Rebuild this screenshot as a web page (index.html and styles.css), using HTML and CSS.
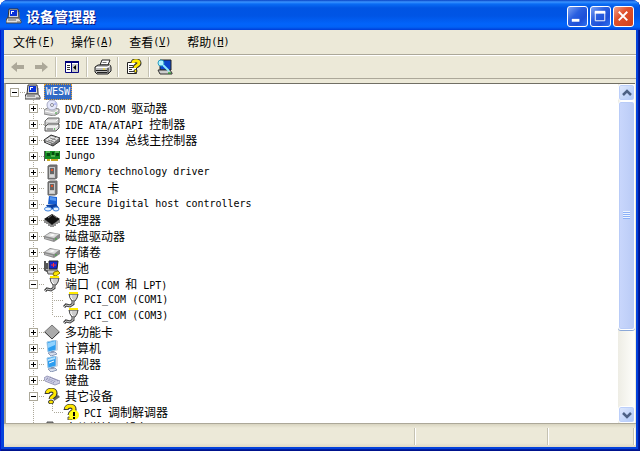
FILE: index.html
```html
<!DOCTYPE html>
<html lang="zh-CN">
<head>
  <meta charset="UTF-8">
  <meta name="viewport" content="width=device-width, initial-scale=1.0">
  <title>设备管理器</title>
  <link rel="stylesheet" href="styles.css">
</head>
<body>

  <svg class="sprite" width="0" height="0">
    <symbol id="i-computer" viewBox="0 0 16 16">
      <path d="M3 1h9l1 9H2z" fill="#d8d8d8" stroke="#333"/>
      <path d="M4 2h7v6H4z" fill="#0a32d8"/>
      <path d="M5 3h3v1H6v2H5z" fill="#fff"/>
      <path d="M1 10h12l2 3v2H0v-2z" fill="#ddd" stroke="#444"/>
      <path d="M2 12h8M11 14h3" stroke="#666"/>
      <path d="M13 4v6l2 2" fill="none" stroke="#777"/>
    </symbol>
    <symbol id="i-dvd" viewBox="0 0 16 16">
      <path d="M0 10l5-3 10 2v4l-5 3-10-2z" fill="#c9c9cb" stroke="#888"/>
      <path d="M1 11l9 2 4-3" fill="none" stroke="#fff"/>
      <ellipse cx="8" cy="5" rx="5" ry="5" fill="#e4e7fa" stroke="#a9abc4"/>
      <path d="M8 5l4-3 1 3z" fill="#b6bdf2"/>
      <circle cx="8" cy="5" r="1.5" fill="#fff" stroke="#889"/>
      <path d="M11 13h2" stroke="#4a4"/>
    </symbol>
    <symbol id="i-ide" viewBox="0 0 16 16">
      <path d="M1 5l3-3h11v5l-3 3H1z" fill="#ccc" stroke="#666"/>
      <path d="M2 5h10l2-2" fill="none" stroke="#fff"/>
      <path d="M1 11l3-3h11v4l-3 3H1z" fill="#ddd" stroke="#555"/>
      <path d="M2 11h10l2-2" fill="none" stroke="#fff"/>
      <path d="M3 13h6" stroke="#666"/>
      <path d="M10 13h1" stroke="#0a0"/>
    </symbol>
    <symbol id="i-1394" viewBox="0 0 16 16">
      <path d="M0 8l7-5 9 3v3l-7 5-9-4z" fill="#777" stroke="#333"/>
      <path d="M1 8l6-4 8 2-6 5z" fill="#e6e6e6"/>
      <path d="M4 8l6 2M6 6l6 2M7 9l5-4" stroke="#888"/>
      <path d="M2 10l5 2" stroke="#ddd"/>
    </symbol>
    <symbol id="i-jungo" viewBox="0 0 16 16">
      <path d="M0 3v10" stroke="#555" stroke-width="2"/>
      <path d="M1 3h15v8H1z" fill="#138a22"/>
      <path d="M3 5h3v3H3zM8 4h2v3H8zM12 5h3v3h-3z" fill="#064b10"/>
      <path d="M2 4h4M7 8h4M11 4h4" stroke="#8edb80"/>
      <path d="M3 12h3M7 12h7" stroke="#c5a821" stroke-width="2"/>
    </symbol>
    <symbol id="i-card" viewBox="0 0 16 16">
      <path d="M4 2l2-1h7v13l-2 1H4z" fill="#777" stroke="#666"/>
      <path d="M5 3h6v11H5z" fill="#c5c5c5"/>
      <path d="M6 4h4v6H6z" fill="#666"/>
      <path d="M7 5h2v2H7z" fill="#e2542c"/>
      <path d="M6 12h4" stroke="#eee"/>
    </symbol>
    <symbol id="i-sd" viewBox="0 0 16 16">
      <path d="M5 0l8 1v8l-9-1z" fill="#1860d4"/>
      <path d="M6 1l6 1v3L6 4z" fill="#5597f0"/>
      <path d="M2 9l10-1 3 4-10 2z" fill="#0b3fa0"/>
      <ellipse cx="4" cy="13" rx="3.5" ry="2" fill="#e8f2ff" stroke="#3c82dd"/>
      <ellipse cx="12" cy="13" rx="3" ry="2" fill="#e8f2ff" stroke="#3c82dd"/>
    </symbol>
    <symbol id="i-cpu" viewBox="0 0 16 16">
      <path d="M0 7l8-5 8 5-8 6z" fill="#111"/>
      <path d="M1 8v3M3 9v3M5 10v4M7 12v3M9 12v3M11 10v4M13 9v3M15 8v3" stroke="#222"/>
      <path d="M4 6l4-3M9 3l4 3" fill="none" stroke="#777"/>
    </symbol>
    <symbol id="i-disk" viewBox="0 0 16 16">
      <path d="M0 8l6-4 10 2v4l-6 4-10-3z" fill="#8a8a8a"/>
      <path d="M1 8l5-3 9 1-5 4z" fill="#dcdcdc"/>
      <path d="M5 7l4-1 2 1-3 1z" fill="#fff"/>
      <path d="M1 10l8 2" stroke="#bbb"/>
      <path d="M11 11h2" stroke="#3a3"/>
    </symbol>
    <symbol id="i-battery" viewBox="0 0 16 16">
      <path d="M1 1v9l4 2M3 3v6" fill="none" stroke="#555" stroke-width="2"/>
      <path d="M5 1h9l-1 8H5z" fill="#1626d0" stroke="#222"/>
      <path d="M7 5h5M9.500 3v4" stroke="#f33"/>
      <path d="M3 10h11l-2 4H4z" fill="#c9c9c9" stroke="#555"/>
      <path d="M10 12l4-1 2 2-4 3-3-1z" fill="#ffe600" stroke="#8b7a00"/>
    </symbol>
    <symbol id="i-port" viewBox="0 0 16 16">
      <path d="M6 2h9l-1 4-2 3H9L7 6z" fill="#ccc" stroke="#444"/>
      <path d="M6 1h9" stroke="#ffea00" stroke-width="2"/>
      <path d="M8 3v3l2 2" fill="none" stroke="#fff"/>
      <path d="M10 9v3l-3 2-4-1-2 2" fill="none" stroke="#444" stroke-width="3"/>
      <path d="M10 9v3l-3 2-4-1-2 2" fill="none" stroke="#ccc"/>
    </symbol>
    <symbol id="i-multi" viewBox="0 0 16 16">
      <path d="M8 1l7.500 7L8 15 .5 8z" fill="#aaa" stroke="#777"/>
      <path d="M1 8l7 7 7-7" fill="none" stroke="#444"/>
    </symbol>
    <symbol id="i-pc" viewBox="0 0 16 16">
      <path d="M3 2l9-2v10l-8 2z" fill="#2c9df0" stroke="#9cc6e6"/>
      <path d="M4 3l7-2v4L4 8z" fill="#8fd2ff"/>
      <path d="M12 0l2 1v9l-2 1z" fill="#ccd5e2"/>
      <path d="M7 11h3l1 2-3 1z" fill="#7f93b4"/>
      <path d="M4 13l7-1 2 2-6 2z" fill="#d5ddec" stroke="#8c9bb8"/>
    </symbol>
    <symbol id="i-monitor" viewBox="0 0 16 16">
      <path d="M3 2l9-2v10l-8 2z" fill="#2c9df0" stroke="#9cc6e6"/>
      <path d="M4 3l7-2v2L4 5z" fill="#b4e2ff"/>
      <path d="M5 7l5-2" stroke="#fff"/>
      <path d="M12 0l2 1v9l-2 1z" fill="#ccd5e2"/>
      <path d="M7 11h3l1 2-3 1z" fill="#7f93b4"/>
      <path d="M4 13l7-1 2 2-6 2z" fill="#d5ddec" stroke="#8c9bb8"/>
    </symbol>
    <symbol id="i-keyboard" viewBox="0 0 16 16">
      <path d="M0 6l3-2 13 5v2l-5 2-10-4z" fill="#cfd0e6" stroke="#9a9bbb"/>
      <path d="M3 6l9 4M2 7l8 4M6 5l8 4" stroke="#7d7fa8" stroke-dasharray="1 1"/>
    </symbol>
    <symbol id="i-unknown" viewBox="0 0 16 16">
      <path d="M9 9l5-2 2 2-6 4z" fill="#666"/>
      <path d="M3 6c0-5 9-5 8 0-1 3-4 2-4 5" fill="none" stroke="#333" stroke-width="5"/>
      <path d="M3 5c1-4 8-4 8 0s-4 3-4 6" fill="none" stroke="#ffe800" stroke-width="3"/>
      <ellipse cx="7" cy="14" rx="2.500" ry="2" fill="#ffe800" stroke="#333"/>
    </symbol>
    <symbol id="i-warning" viewBox="0 0 16 16">
      <path d="M3 6c0-5 9-5 8 0-1 3-4 2-4 5" fill="none" stroke="#333" stroke-width="5"/>
      <path d="M3 5c1-4 8-4 8 0s-4 3-4 6" fill="none" stroke="#ffe800" stroke-width="3"/>
      <path d="M5 13h4v3H5z" fill="#ffe800" stroke="#555"/>
      <circle cx="11" cy="11" r="5" fill="#ffff1a"/>
      <path d="M11 8v4M11 13v2" stroke="#000" stroke-width="2"/>
    </symbol>
    <symbol id="i-hid" viewBox="0 0 16 16">
      <path d="M3 2h6v13H3z" fill="#888" stroke="#555"/>
    </symbol>
    <symbol id="i-arrow" viewBox="0 0 14 12">
      <path d="M0 6l6-5v3h7v4H6v3z" fill="#aca899"/>
    </symbol>
    <symbol id="i-panel" viewBox="0 0 16 16">
      <path d="M1.500 2.500h13v11h-13z" fill="#fff" stroke="#00007b"/>
      <path d="M1 3h14" stroke="#00007b" stroke-width="2"/>
      <path d="M7.500 4v9" stroke="#00007b"/>
      <path d="M8 5h6v8H8z" fill="#c8c8c8"/>
      <path d="M3 6.500h3M3 8.500h3M3 10.500h3" stroke="#333"/>
      <path d="M12 6v5L9 8.500z" fill="#000"/>
    </symbol>
    <symbol id="i-print" viewBox="0 0 18 16">
      <path d="M6 6l2-5h8l-2 5z" fill="#fff" stroke="#222"/>
      <path d="M8.500 3.500h4M8 5.500h4" stroke="#777"/>
      <path d="M1 8l3-2h12l1 2v4l-3 3H3l-2-2z" fill="#bbb" stroke="#222"/>
      <path d="M2 8.500h11l3-2" fill="none" stroke="#fff"/>
      <path d="M2 11.500h11M3 13.500h10" stroke="#222"/>
      <path d="M9 10h2" stroke="#ffe800"/>
      <path d="M14 9v5" stroke="#222"/>
    </symbol>
    <symbol id="i-help" viewBox="0 0 16 16">
      <path d="M1.500 3.500h9v11h-9z" fill="#fff" stroke="#222"/>
      <path d="M3 6.500h4M3 8.500h4M3 10.500h3M3 12.500h5" stroke="#333"/>
      <path d="M7 4c0-3 6-3 6 0s-4 2-4 5" fill="none" stroke="#333" stroke-width="5"/>
      <path d="M7 4c0-3 6-3 6 0s-4 2-4 5" fill="none" stroke="#ffe800" stroke-width="3"/>
      <circle cx="9.500" cy="12" r="1.500" fill="#ffe800" stroke="#333"/>
    </symbol>
    <symbol id="i-scan" viewBox="0 0 16 16">
      <path d="M3 1h11v10H3z" fill="#0b46cc" stroke="#222"/>
      <path d="M1 11h12l2 3v1H3z" fill="#ccc" stroke="#333"/>
      <circle cx="4" cy="4" r="3" fill="#b2f2ff" stroke="#289cc2"/>
      <path d="M6 6l6 6" stroke="#8eeaff" stroke-width="2"/>
      <path d="M11 14h3" stroke="#090"/>
    </symbol>
    <symbol id="i-chevron" viewBox="0 0 10 8">
      <path d="M1 6l4-4 4 4" fill="none" stroke="#4d6185" stroke-width="2.500"/>
    </symbol>
  </svg>

  <div class="window">
    <header class="title-bar">
      <svg class="icon"><use href="#i-computer"/></svg>
      <h1>设备管理器</h1>
      <button type="button" class="caption" aria-label="最小化"><svg viewBox="0 0 20 20"><path d="M4 14h8" stroke="#fff" stroke-width="3"/></svg></button>
      <button type="button" class="caption" aria-label="最大化"><svg viewBox="0 0 20 20"><path d="M4.500 5v9.500h10V5" fill="none" stroke="#fff"/><path d="M4 5.500h11" stroke="#fff" stroke-width="3"/></svg></button>
      <button type="button" class="caption close" aria-label="关闭"><svg viewBox="0 0 20 20"><path d="M5 5l9 9M14 5l-9 9" stroke="#fff" stroke-width="2"/></svg></button>
    </header>

    <nav class="menu-bar">
      <button type="button">文件<span class="en">(<u>F</u>)</span></button>
      <button type="button">操作<span class="en">(<u>A</u>)</span></button>
      <button type="button">查看<span class="en">(<u>V</u>)</span></button>
      <button type="button">帮助<span class="en">(<u>H</u>)</span></button>
    </nav>

    <div class="tool-bar">
      <button type="button" aria-label="后退"><svg class="arrow"><use href="#i-arrow"/></svg></button>
      <button type="button" aria-label="前进"><svg class="arrow flip"><use href="#i-arrow"/></svg></button>
      <span class="sep"></span>
      <button type="button" aria-label="显示/隐藏控制台树"><svg class="icon"><use href="#i-panel"/></svg></button>
      <span class="sep"></span>
      <button type="button" aria-label="打印"><svg class="icon wide"><use href="#i-print"/></svg></button>
      <span class="sep"></span>
      <button type="button" aria-label="帮助"><svg class="icon"><use href="#i-help"/></svg></button>
      <span class="sep"></span>
      <button type="button" aria-label="扫描检测硬件改动"><svg class="icon"><use href="#i-scan"/></svg></button>
    </div>

    <main class="content">
      <div class="tree">
        <div class="row">
          <button type="button" class="toggle open" aria-label="折叠"></button><i></i>
          <svg class="icon"><use href="#i-computer"/></svg>
          <span class="label selected en">WESW</span>
        </div>
        <ul class="devices">
          <li class="row"><button type="button" class="toggle" aria-label="展开"></button><i></i><svg class="icon"><use href="#i-dvd"/></svg><span class="label"><span class="en">DVD/CD-ROM </span>驱动器</span></li>
          <li class="row"><button type="button" class="toggle" aria-label="展开"></button><i></i><svg class="icon"><use href="#i-ide"/></svg><span class="label"><span class="en">IDE ATA/ATAPI </span>控制器</span></li>
          <li class="row"><button type="button" class="toggle" aria-label="展开"></button><i></i><svg class="icon"><use href="#i-1394"/></svg><span class="label"><span class="en">IEEE 1394 </span>总线主控制器</span></li>
          <li class="row"><button type="button" class="toggle" aria-label="展开"></button><i></i><svg class="icon"><use href="#i-jungo"/></svg><span class="label"><span class="en">Jungo</span></span></li>
          <li class="row"><button type="button" class="toggle" aria-label="展开"></button><i></i><svg class="icon"><use href="#i-card"/></svg><span class="label"><span class="en">Memory technology driver</span></span></li>
          <li class="row"><button type="button" class="toggle" aria-label="展开"></button><i></i><svg class="icon"><use href="#i-card"/></svg><span class="label"><span class="en">PCMCIA </span>卡</span></li>
          <li class="row"><button type="button" class="toggle" aria-label="展开"></button><i></i><svg class="icon"><use href="#i-sd"/></svg><span class="label"><span class="en">Secure Digital host controllers</span></span></li>
          <li class="row"><button type="button" class="toggle" aria-label="展开"></button><i></i><svg class="icon"><use href="#i-cpu"/></svg><span class="label">处理器</span></li>
          <li class="row"><button type="button" class="toggle" aria-label="展开"></button><i></i><svg class="icon"><use href="#i-disk"/></svg><span class="label">磁盘驱动器</span></li>
          <li class="row"><button type="button" class="toggle" aria-label="展开"></button><i></i><svg class="icon"><use href="#i-disk"/></svg><span class="label">存储卷</span></li>
          <li class="row"><button type="button" class="toggle" aria-label="展开"></button><i></i><svg class="icon"><use href="#i-battery"/></svg><span class="label">电池</span></li>
          <li>
            <div class="row"><button type="button" class="toggle open" aria-label="折叠"></button><i></i><svg class="icon"><use href="#i-port"/></svg><span class="label">端口<span class="en"> (COM </span>和<span class="en"> LPT)</span></span></div>
            <ul class="sub">
              <li class="row"><i></i><svg class="icon"><use href="#i-port"/></svg><span class="label"><span class="en">PCI_COM (COM1)</span></span></li>
              <li class="row"><i></i><svg class="icon"><use href="#i-port"/></svg><span class="label"><span class="en">PCI_COM (COM3)</span></span></li>
            </ul>
          </li>
          <li class="row"><button type="button" class="toggle" aria-label="展开"></button><i></i><svg class="icon"><use href="#i-multi"/></svg><span class="label">多功能卡</span></li>
          <li class="row"><button type="button" class="toggle" aria-label="展开"></button><i></i><svg class="icon"><use href="#i-pc"/></svg><span class="label">计算机</span></li>
          <li class="row"><button type="button" class="toggle" aria-label="展开"></button><i></i><svg class="icon"><use href="#i-monitor"/></svg><span class="label">监视器</span></li>
          <li class="row"><button type="button" class="toggle" aria-label="展开"></button><i></i><svg class="icon"><use href="#i-keyboard"/></svg><span class="label">键盘</span></li>
          <li>
            <div class="row"><button type="button" class="toggle open" aria-label="折叠"></button><i></i><svg class="icon"><use href="#i-unknown"/></svg><span class="label">其它设备</span></div>
            <ul class="sub">
              <li class="row"><i></i><svg class="icon"><use href="#i-warning"/></svg><span class="label"><span class="en">PCI </span>调制解调器</span></li>
            </ul>
          </li>
          <li class="row"><button type="button" class="toggle" aria-label="展开"></button><i></i><svg class="icon"><use href="#i-hid"/></svg><span class="label">人体学输入设备</span></li>
        </ul>
      </div>
      <div class="scrollbar">
        <button type="button" aria-label="向上滚动"><svg><use href="#i-chevron"/></svg></button>
        <div class="track"><div class="thumb"><span class="grip"></span></div></div>
        <button type="button" aria-label="向下滚动"><svg class="down"><use href="#i-chevron"/></svg></button>
      </div>
    </main>

    <footer class="status-bar">
      <span></span>
      <span></span>
      <span></span>
    </footer>
  </div>

</body>
</html>
```

FILE: styles.css
```css
* {
  box-sizing: border-box;
}
body {
  margin: 0;
  background-color: #fff;
  font-family: "Noto Sans CJK SC", sans-serif;
  font-size: 12px;
  color: #000;
}
button {
  padding: 0;
  border: none;
  background: none;
  font: inherit;
  color: inherit;
}
ul {
  margin: 0;
  padding: 0;
  list-style: none;
}
svg {
  display: block;
  flex: none;
}
.sprite {
  position: absolute;
}
.icon {
  width: 16px;
  height: 16px;
}
.icon.wide {
  width: 18px;
}
.en {
  font-family: "DejaVu Sans Mono", monospace;
  font-size: 10px;
  white-space: pre;
}

/* window frame */
.window {
  display: flex;
  flex-direction: column;
  height: 100vh;
  padding: 0 4px 4px;
  border-radius: 8px 8px 0 0;
  background-color: #0442dc;
  box-shadow: inset 1px 0 #0019cf, inset -1px -1px #00138c, inset -2px -2px #001ea0;
}
.title-bar {
  display: flex;
  align-items: center;
  gap: 2px;
  flex: none;
  height: 30px;
  margin: 0 -4px;
  padding: 2px 6px 0;
  border-radius: 8px 8px 0 0;
  background: linear-gradient(#0842c4 0, #3a93ff 2px, #0a6cf4 4px, #0054e3 8px, #0055e5 16px, #0264fb 24px, #0262f6 27px, #003dd7 30px);
  color: #fff;
}
.title-bar h1 {
  flex: 1;
  margin: 0 0 0 2px;
  font-size: 14px;
  line-height: 20px;
  text-shadow: 1px 1px #0a1883;
}
.caption {
  width: 21px;
  height: 21px;
  border: 1px solid #fff;
  border-radius: 3px;
  background: linear-gradient(135deg, #7da2f3, #2a5fe0 40%, #1d4fd8 70%, #2f72f2);
}
.caption svg {
  width: 19px;
  height: 19px;
}
.caption.close {
  background: linear-gradient(135deg, #f0a08a, #e0512c 40%, #d0401b);
}

/* menu and tools */
.menu-bar {
  display: flex;
  align-items: center;
  gap: 16px;
  flex: none;
  height: 25px;
  padding: 0 9px;
  border-bottom: 1px solid #aca899;
  background-color: #ece9d8;
}
.menu-bar button {
  display: flex;
  align-items: center;
  line-height: 18px;
}
.tool-bar {
  display: flex;
  align-items: center;
  flex: none;
  height: 24px;
  padding: 0 2px;
  border-top: 1px solid #fff;
  border-bottom: 1px solid #aca899;
  background-color: #ece9d8;
}
.tool-bar button {
  display: flex;
  align-items: center;
  justify-content: center;
  width: 23px;
  height: 22px;
}
.arrow {
  width: 14px;
  height: 12px;
}
.flip {
  transform: scaleX(-1);
}
.sep {
  width: 2px;
  height: 20px;
  margin: 0 3px;
  border-left: 1px solid #c5c2b2;
  border-right: 1px solid #fff;
}

/* device tree */
.content {
  display: flex;
  flex: 1;
  min-height: 0;
  border-top: 4px solid #ece9d8;
  border-right: 1px solid #ece9d8;
  background-color: #fff;
}
.tree {
  flex: 1;
  overflow: hidden;
  padding: 0 0 0 4px;
  border-top: 1px solid #716f64;
  border-left: 2px solid #aca899;
}
.row {
  display: flex;
  align-items: center;
  height: 16px;
}
.devices {
  margin-left: 19px;
  background: repeating-linear-gradient(#aca899 0 1px, transparent 1px 2px) 4px 0 / 1px 100% no-repeat;
}
.toggle {
  flex: none;
  width: 9px;
  height: 9px;
  border: 1px solid #aca899;
  background:
    linear-gradient(#000, #000) center / 5px 1px no-repeat,
    linear-gradient(#000, #000) center / 1px 5px no-repeat,
    #fff;
}
.toggle.open {
  background: linear-gradient(#000, #000) center / 5px 1px no-repeat, #fff;
}
.row i {
  flex: none;
  width: 6px;
  height: 1px;
  background: repeating-linear-gradient(90deg, transparent 0 1px, #aca899 1px 2px);
}
.sub {
  margin-left: 19px;
}
.sub .row {
  background: repeating-linear-gradient(#aca899 0 1px, transparent 1px 2px) 4px 0 / 1px 100% no-repeat;
}
.sub .row:last-child {
  background-size: 1px 50%;
}
.sub .row i {
  width: 10px;
  margin-left: 5px;
}
.label {
  display: flex;
  align-items: baseline;
  height: 16px;
  margin-left: 3px;
  padding: 0 2px;
  line-height: 16px;
  white-space: nowrap;
}
.label:not(.selected)::before {
  content: "";
  line-height: 16px;
}
.selected {
  padding: 0 1px;
  border: 1px dotted #e8a030;
  background-color: #316ac5;
  color: #fff;
  line-height: 14px;
}

/* scroll bar */
.scrollbar {
  display: flex;
  flex-direction: column;
  flex: none;
  width: 17px;
  border-top: 1px solid #716f64;
  background: linear-gradient(90deg, #eeede5, #fefefb);
}
.scrollbar button {
  display: flex;
  align-items: center;
  justify-content: center;
  flex: none;
  height: 17px;
  border: 1px solid #fff;
  border-radius: 3px;
  background: linear-gradient(135deg, #e1eafe, #aec8f7);
  box-shadow: inset 0 0 0 1px #bccffa;
}
.scrollbar svg {
  width: 10px;
  height: 8px;
}
.down {
  transform: scaleY(-1);
}
.track {
  flex: 1;
}
.thumb {
  display: flex;
  align-items: center;
  justify-content: center;
  height: 75%;
  border: 1px solid #fff;
  border-radius: 3px;
  background: linear-gradient(90deg, #c9d7fc, #bacbf6);
  box-shadow: inset 0 0 0 1px #b9ccf8, 0 1px #8ba8d8;
}
.grip {
  width: 7px;
  height: 8px;
  background: repeating-linear-gradient(#eef4fe 0 1px, #8cb0f8 1px 2px);
}

/* status bar */
.status-bar {
  display: flex;
  flex: none;
  height: 24px;
  padding: 4px 2px 2px 0;
  border-top: 1px solid #aca899;
  background: linear-gradient(#d8d4c0, #ece9d8 4px, #ece9d8 19px, #dcd8c6);
}
.status-bar span {
  flex: 133;
  border-right: 1px solid #c5c2b2;
  box-shadow: 1px 0 #fff;
}
.status-bar span:first-child {
  flex: 411;
}
.status-bar span:last-child {
  flex: 85;
}
```
